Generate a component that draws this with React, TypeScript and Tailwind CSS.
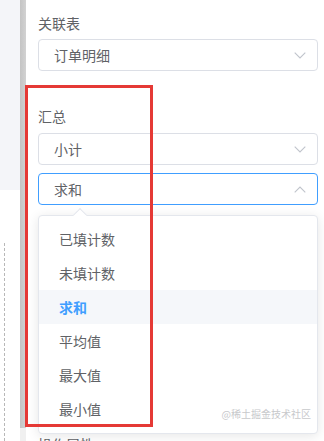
import React from "react";

const font = { fontFamily: '"Noto Sans CJK SC", "Noto Sans", sans-serif' };

function Chevron({ up = false }: { up?: boolean }) {
  return (
    <svg width="12" height="7" viewBox="0 0 12 7" fill="none" className="shrink-0">
      {up ? (
        <path d="M0.7 6.3 L6 1 L11.3 6.3" stroke="#c0c4cc" strokeWidth="1.1" />
      ) : (
        <path d="M0.7 0.7 L6 6 L11.3 0.7" stroke="#c0c4cc" strokeWidth="1.1" />
      )}
    </svg>
  );
}

function Select({ value, focus = false, up = false }: { value: string; focus?: boolean; up?: boolean }) {
  return (
    <div
      className={`h-[32px] rounded-[4px] border flex items-center justify-between pl-[15px] pr-[11px] bg-white ${
        focus ? "border-[#409eff]" : "border-[#dcdfe6]"
      }`}
    >
      <span className="text-[14px] text-[#606266] leading-none">{value}</span>
      <Chevron up={up} />
    </div>
  );
}

const items = ["已填计数", "未填计数", "求和", "平均值", "最大值", "最小值"];

export default function App() {
  return (
    <div className="relative w-[324px] h-[441px] overflow-hidden bg-white flex" style={font}>
      {/* left canvas strip */}
      <div className="w-[20px] flex flex-col">
        <div className="h-[190px] bg-[#f4f5f9]" />
        <div className="flex-1 bg-white pt-[53px] pl-[4px]">
          <div className="h-full border-l border-dashed border-[#b8b8b8]" />
        </div>
      </div>
      {/* scrollbar-like gray bar */}
      <div className="w-[6px] flex flex-col">
        <div className="h-[428px] bg-gradient-to-r from-[#c4c4c4] to-[#d2d2d2]" />
        <div className="flex-1 bg-[#f0f0f0]" />
      </div>
      {/* panel */}
      <div className="flex-1 pl-[12px] pr-[6px] pt-[13px] flex flex-col">
        <div className="text-[14px] leading-[20px] text-[#606266]">关联表</div>
        <div className="mt-[6px]">
          <Select value="订单明细" />
        </div>
        <div className="mt-[10px] h-px bg-[#e4e7ed]" />
        <div className="mt-[25px] text-[14px] leading-[20px] text-[#606266]">汇总</div>
        <div className="mt-[7px]">
          <Select value="小计" />
        </div>
        <div className="mt-[8px]">
          <Select value="求和" focus up />
        </div>
        <div className="mt-[229px] text-[14px] leading-[20px] text-[#606266]">操作属性</div>
      </div>

      {/* dropdown popper */}
      <div className="absolute left-[38px] top-[215px] w-[280px] h-[219px] bg-white border border-[#e4e7ed] rounded-[4px] shadow-[0_2px_12px_rgba(0,0,0,0.1)] py-[6px]">
        <div className="absolute -top-[6px] left-[36px] w-[10px] h-[10px] bg-white border-l border-t border-[#e4e7ed] rotate-45" />
        {items.map((t) => (
          <div
            key={t}
            className={`h-[34px] flex items-center pl-[20px] text-[14px] ${
              t === "求和" ? "bg-[#f5f7fa] text-[#409eff] font-bold" : "text-[#606266]"
            }`}
          >
            {t}
          </div>
        ))}
        <div className="absolute right-[6px] bottom-[14px] text-[10px] leading-none text-[#c8c9cc]">
          @稀土掘金技术社区
        </div>
      </div>

      {/* red annotation rectangle */}
      <div className="absolute left-[25px] top-[85px] w-[128px] h-[342px] border-[3px] border-[#e53935] pointer-events-none" />
    </div>
  );
}
